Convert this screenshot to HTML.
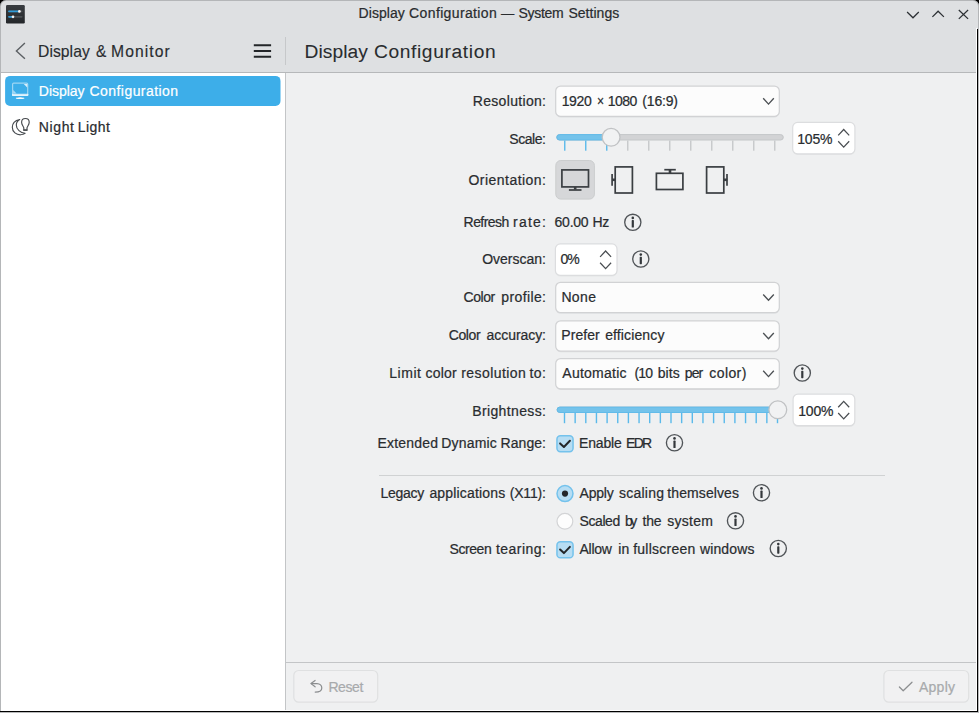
<!DOCTYPE html>
<html><head><meta charset="utf-8"><title>Display Configuration — System Settings</title>
<style>
html,body{margin:0;padding:0;}
body{width:979px;height:713px;overflow:hidden;background:#000;position:relative;font-family:"Liberation Sans",sans-serif;}
.a{position:absolute;}
.t{position:absolute;-webkit-text-stroke:0.22px currentColor;white-space:pre;line-height:24px;height:24px;font-family:"Liberation Sans",sans-serif;}
svg{position:absolute;overflow:visible;}
</style></head><body>
<!-- outer frame -->
<div class="a" style="left:0;top:0;width:979px;height:713px;background:#b9babb;border-radius:6px 6px 0 0;"></div>
<div class="a" style="left:0;top:0;width:978px;height:712px;background:#000;border-radius:6px 6px 0 0;"></div>
<!-- titlebar + header -->
<div class="a" style="left:0;top:0;width:979px;height:29px;background:#b4b6b8;border-radius:6px 6px 0 0;"></div>
<div class="a" style="left:1px;top:1px;width:977px;height:28px;background:#dee0e2;border-radius:5px 5px 0 0;"></div>
<div class="a" style="left:0;top:29px;width:1px;height:682px;background:#b4b6b8;"></div>
<div class="a" style="left:1px;top:28px;width:976px;height:683px;background:#ffffff;"></div>
<div class="a" style="left:1px;top:28px;width:975px;height:44px;background:#dee0e2;"></div>
<div class="a" style="left:1px;top:72px;width:975px;height:1px;background:#b6b8ba;"></div>
<!-- sidebar -->
<div class="a" style="left:1px;top:73px;width:284px;height:637px;background:#ffffff;"></div>
<div class="a" style="left:285px;top:73px;width:1px;height:637px;background:#c3c5c7;"></div>
<div class="a" style="left:285px;top:37px;width:1px;height:28px;background:#c6c8ca;"></div>
<!-- content -->
<div class="a" style="left:286px;top:73px;width:690px;height:589px;background:#eff0f1;"></div>
<div class="a" style="left:286px;top:662px;width:690px;height:1px;background:#c3c5c7;"></div>
<div class="a" style="left:286px;top:663px;width:690px;height:47px;background:#eff0f1;"></div>
<!-- selected item -->
<svg style="left:0;top:70px" width="290" height="40" viewBox="0 70 290 40"><rect x="5.1" y="75.9" width="275.4" height="30" rx="5" fill="#3daee9"/></svg>
<svg style="left:6.1px;top:5.25px" width="18.8" height="18.4" viewBox="0 0 18.8 18.4">
<defs><linearGradient id="g1" x1="0" y1="0" x2="0" y2="1"><stop offset="0" stop-color="#383c40"/><stop offset="1" stop-color="#24272a"/></linearGradient></defs>
<rect width="18.8" height="18.4" rx="1.2" fill="url(#g1)"/>
<rect x="2.1" y="5.6" width="14.5" height="1.7" rx="0.8" fill="#4a4e52"/>
<rect x="2.1" y="5.6" width="11.2" height="1.7" rx="0.8" fill="#2f9bd8"/>
<circle cx="13.4" cy="6.45" r="1.35" fill="#f4f4f4"/>
<rect x="2.1" y="10.95" width="14.5" height="1.7" rx="0.8" fill="#4a4e52"/>
<rect x="2.1" y="10.95" width="4.6" height="1.7" rx="0.8" fill="#2f9bd8"/>
<circle cx="7" cy="11.8" r="1.35" fill="#f4f4f4"/>
</svg>
<svg style="left:0;top:0" width="979" height="30" viewBox="0 0 979 30" fill="none" stroke="#2c3034" stroke-width="1.25">
<path d="M907.1 12 L913 17.8 L918.8 12"/>
<path d="M932.4 16.9 L938.1 11.2 L943.9 16.9"/>
<path d="M958.8 10 L968.1 18.9 M968.1 10 L958.8 18.9"/>
</svg>
<svg style="left:0;top:30px" width="290" height="42" viewBox="0 30 290 42" fill="none">
<path d="M24.9 42.9 L16.4 50.9 L24.9 58.8" stroke="#5c6064" stroke-width="1.4"/>
<g stroke="#232629" stroke-width="2"><path d="M253.8 45.2H271.1M253.8 50.9H271.1M253.8 56.7H271.1"/></g>
</svg>
<svg style="left:0;top:76px" width="40" height="30" viewBox="0 76 40 30">
<rect x="12.6" y="83.2" width="15.1" height="12.2" rx="1" fill="none" stroke="#ffffff" stroke-opacity="0.5" stroke-width="1.2"/>
<rect x="12" y="93.7" width="16.3" height="2.3" rx="0.6" fill="#ffffff" fill-opacity="0.72"/>
<path d="M23.8 84 L27.2 84 L27.2 87.4 Z" fill="#ffffff" fill-opacity="0.8"/>
<path d="M13.2 90 L16.6 93.6 L13.2 93.6 Z" fill="#ffffff" fill-opacity="0.55"/>
<path d="M15.9 98.9 Q20.1 95.6 24.3 98.9 Z" fill="#ffffff" fill-opacity="0.85"/>
<rect x="15.9" y="97.6" width="8.4" height="1.4" rx="0.5" fill="#ffffff" fill-opacity="0.6"/>
</svg>
<svg style="left:0;top:110px" width="40" height="30" viewBox="0 110 40 30" fill="none" stroke="#474b4f" stroke-width="1.15" stroke-linejoin="round" stroke-linecap="round">
<path d="M19.7 119.5 C14.5 120.2 12.3 124 12.3 127.2 C12.3 132 16.5 134.9 20.5 134.8 C22.5 134.7 24 134.2 25.1 133.4 C20.5 132.8 16.3 129.5 16.3 125 C16.3 122.5 17.8 120.6 19.7 119.5 Z"/>
<path d="M23.8 130.2 L23.8 127.9 C23.5 126.2 21.6 124.9 21.6 122.2 C21.6 120.1 23.3 118.5 25.4 118.5 C27.5 118.5 29.2 120.1 29.2 122.2 C29.2 124.9 27.3 126.2 27 127.9 L27 130.2 Z"/>
<path d="M24 130 H26.8" stroke-width="1.6"/>
</svg>
<svg style="left:0;top:0" width="979" height="713" viewBox="0 0 979 713" ><rect x="555.50" y="86.80" width="224.00" height="30.80" rx="5.5" fill="#dcdddf"/><rect x="555.70" y="86.10" width="223.60" height="30.20" rx="4.90" fill="#fcfcfc" stroke="#d1d2d4" stroke-width="1.2"/><path d="M763.2 98.30 L768.5 104.10 L773.8 98.30" fill="none" stroke="#4c5054" stroke-width="1.35"/></svg>
<svg style="left:0;top:0" width="979" height="713" viewBox="0 0 979 713" ><rect x="555.50" y="283.00" width="224.00" height="30.80" rx="5.5" fill="#dcdddf"/><rect x="555.70" y="282.30" width="223.60" height="30.20" rx="4.90" fill="#fcfcfc" stroke="#d1d2d4" stroke-width="1.2"/><path d="M763.2 294.50 L768.5 300.30 L773.8 294.50" fill="none" stroke="#4c5054" stroke-width="1.35"/></svg>
<svg style="left:0;top:0" width="979" height="713" viewBox="0 0 979 713" ><rect x="555.50" y="321.50" width="224.00" height="30.80" rx="5.5" fill="#dcdddf"/><rect x="555.70" y="320.80" width="223.60" height="30.20" rx="4.90" fill="#fcfcfc" stroke="#d1d2d4" stroke-width="1.2"/><path d="M763.2 333.00 L768.5 338.80 L773.8 333.00" fill="none" stroke="#4c5054" stroke-width="1.35"/></svg>
<svg style="left:0;top:0" width="979" height="713" viewBox="0 0 979 713" ><rect x="555.50" y="359.30" width="224.00" height="30.80" rx="5.5" fill="#dcdddf"/><rect x="555.70" y="358.60" width="223.60" height="30.20" rx="4.90" fill="#fcfcfc" stroke="#d1d2d4" stroke-width="1.2"/><path d="M763.2 370.80 L768.5 376.60 L773.8 370.80" fill="none" stroke="#4c5054" stroke-width="1.35"/></svg>
<svg style="left:0;top:0" width="979" height="713" viewBox="0 0 979 713" ><rect x="792.50" y="123.10" width="62.60" height="32.00" rx="5.5" fill="#e4e5e6"/><rect x="792.70" y="122.40" width="62.20" height="31.40" rx="4.90" fill="#ffffff" stroke="#dcdddf" stroke-width="1.2"/><path d="M838.2 135.40 L843.7 129.50 L849.2 135.40 M838.2 141.20 L843.7 147.10 L849.2 141.20" fill="none" stroke="#4a4e52" stroke-width="1.25"/></svg>
<svg style="left:0;top:0" width="979" height="713" viewBox="0 0 979 713" ><rect x="555.20" y="244.60" width="62.00" height="32.00" rx="5.5" fill="#e4e5e6"/><rect x="555.40" y="243.90" width="61.60" height="31.40" rx="4.90" fill="#ffffff" stroke="#dcdddf" stroke-width="1.2"/><path d="M600.1 256.90 L605.6 251.00 L611.1 256.90 M600.1 262.70 L605.6 268.60 L611.1 262.70" fill="none" stroke="#4a4e52" stroke-width="1.25"/></svg>
<svg style="left:0;top:0" width="979" height="713" viewBox="0 0 979 713" ><rect x="792.90" y="394.80" width="62.10" height="32.20" rx="5.5" fill="#e4e5e6"/><rect x="793.10" y="394.10" width="61.70" height="31.60" rx="4.90" fill="#ffffff" stroke="#dcdddf" stroke-width="1.2"/><path d="M838.2 407.20 L843.7 401.30 L849.2 407.20 M838.2 413.00 L843.7 418.90 L849.2 413.00" fill="none" stroke="#4a4e52" stroke-width="1.25"/></svg>
<svg style="left:0;top:0" width="979" height="713" viewBox="0 0 979 713" ><rect x="556.80" y="134.60" width="226.50" height="5.40" rx="2.70" fill="#d2d3d5" stroke="#c4c6c8" stroke-width="1.0"/><rect x="556.80" y="134.60" width="56.80" height="5.40" rx="2.70" fill="#74c3eb" stroke="#62bbe9" stroke-width="1.0"/><rect x="564.05" y="140.50" width="1.4" height="10.2" fill="#5ab9ea"/><rect x="585.05" y="140.50" width="1.4" height="10.2" fill="#5ab9ea"/><rect x="606.05" y="140.50" width="1.4" height="10.2" fill="#5ab9ea"/><rect x="627.05" y="140.50" width="1.4" height="10.2" fill="#c6c8ca"/><rect x="648.05" y="140.50" width="1.4" height="10.2" fill="#c6c8ca"/><rect x="669.05" y="140.50" width="1.4" height="10.2" fill="#c6c8ca"/><rect x="690.05" y="140.50" width="1.4" height="10.2" fill="#c6c8ca"/><rect x="711.05" y="140.50" width="1.4" height="10.2" fill="#c6c8ca"/><rect x="732.05" y="140.50" width="1.4" height="10.2" fill="#c6c8ca"/><rect x="753.05" y="140.50" width="1.4" height="10.2" fill="#c6c8ca"/><rect x="774.05" y="140.50" width="1.4" height="10.2" fill="#c6c8ca"/><circle cx="611.1" cy="137.3" r="8.9" fill="#f1f2f3" stroke="#c0c2c4" stroke-width="1.3"/></svg>
<svg style="left:0;top:0" width="979" height="713" viewBox="0 0 979 713" ><rect x="557.10" y="407.10" width="226.20" height="5.40" rx="2.70" fill="#d2d3d5" stroke="#c4c6c8" stroke-width="1.0"/><rect x="557.10" y="407.10" width="223.20" height="5.40" rx="2.70" fill="#74c3eb" stroke="#62bbe9" stroke-width="1.0"/><rect x="563.80" y="413.00" width="1.4" height="10.2" fill="#5ab9ea"/><rect x="574.45" y="413.00" width="1.4" height="10.2" fill="#5ab9ea"/><rect x="585.10" y="413.00" width="1.4" height="10.2" fill="#5ab9ea"/><rect x="595.75" y="413.00" width="1.4" height="10.2" fill="#5ab9ea"/><rect x="606.40" y="413.00" width="1.4" height="10.2" fill="#5ab9ea"/><rect x="617.05" y="413.00" width="1.4" height="10.2" fill="#5ab9ea"/><rect x="627.70" y="413.00" width="1.4" height="10.2" fill="#5ab9ea"/><rect x="638.35" y="413.00" width="1.4" height="10.2" fill="#5ab9ea"/><rect x="649.00" y="413.00" width="1.4" height="10.2" fill="#5ab9ea"/><rect x="659.65" y="413.00" width="1.4" height="10.2" fill="#5ab9ea"/><rect x="670.30" y="413.00" width="1.4" height="10.2" fill="#5ab9ea"/><rect x="680.95" y="413.00" width="1.4" height="10.2" fill="#5ab9ea"/><rect x="691.60" y="413.00" width="1.4" height="10.2" fill="#5ab9ea"/><rect x="702.25" y="413.00" width="1.4" height="10.2" fill="#5ab9ea"/><rect x="712.90" y="413.00" width="1.4" height="10.2" fill="#5ab9ea"/><rect x="723.55" y="413.00" width="1.4" height="10.2" fill="#5ab9ea"/><rect x="734.20" y="413.00" width="1.4" height="10.2" fill="#5ab9ea"/><rect x="744.85" y="413.00" width="1.4" height="10.2" fill="#5ab9ea"/><rect x="755.50" y="413.00" width="1.4" height="10.2" fill="#5ab9ea"/><rect x="766.15" y="413.00" width="1.4" height="10.2" fill="#5ab9ea"/><rect x="776.80" y="413.00" width="1.4" height="10.2" fill="#5ab9ea"/><circle cx="777.8" cy="409.8" r="8.9" fill="#f1f2f3" stroke="#c0c2c4" stroke-width="1.3"/></svg>
<svg style="left:0;top:0" width="979" height="713" viewBox="0 0 979 713" ><rect x="555.80" y="160.50" width="38.60" height="38.60" rx="5.00" fill="#d6d7d9" stroke="#cbcdce" stroke-width="1.0"/></svg>
<svg style="left:0;top:0" width="979" height="713" viewBox="0 0 979 713" fill="none" stroke="#3a3e42" stroke-width="1.7">
<rect x="561.9" y="169.9" width="26.6" height="17"/>
<path d="M575.2 187 V189.6" stroke-width="2.6"/><path d="M568.9 190 H581.5"/>
<rect x="615.2" y="166.9" width="17.2" height="26.1"/>
<path d="M612.1 174 V185.7"/><path d="M612 179.8 H615" stroke-width="2.6"/>
<rect x="656.4" y="173.3" width="26.5" height="16.2"/>
<path d="M664.3 169.7 H675.8"/><path d="M670 169.7 V173" stroke-width="2.6"/>
<rect x="706.6" y="166.9" width="17.2" height="26.1"/>
<path d="M727 174 V185.7"/><path d="M724 179.8 H727.2" stroke-width="2.6"/>
</svg>
<svg style="left:0;top:0" width="979" height="713" viewBox="0 0 979 713"><circle cx="632.8" cy="222.3" r="8.1" fill="none" stroke="#505458" stroke-width="1.35"/><circle cx="632.8" cy="217.9" r="1.3" fill="#34383c"/><rect x="631.6999999999999" y="220.10000000000002" width="2.2" height="7.4" rx="0.6" fill="#34383c"/></svg>
<svg style="left:0;top:0" width="979" height="713" viewBox="0 0 979 713"><circle cx="640.8" cy="259" r="8.1" fill="none" stroke="#505458" stroke-width="1.35"/><circle cx="640.8" cy="254.6" r="1.3" fill="#34383c"/><rect x="639.6999999999999" y="256.8" width="2.2" height="7.4" rx="0.6" fill="#34383c"/></svg>
<svg style="left:0;top:0" width="979" height="713" viewBox="0 0 979 713"><circle cx="802.3" cy="373" r="8.1" fill="none" stroke="#505458" stroke-width="1.35"/><circle cx="802.3" cy="368.6" r="1.3" fill="#34383c"/><rect x="801.1999999999999" y="370.8" width="2.2" height="7.4" rx="0.6" fill="#34383c"/></svg>
<svg style="left:0;top:0" width="979" height="713" viewBox="0 0 979 713"><circle cx="674.5" cy="442.8" r="8.1" fill="none" stroke="#505458" stroke-width="1.35"/><circle cx="674.5" cy="438.40000000000003" r="1.3" fill="#34383c"/><rect x="673.4" y="440.6" width="2.2" height="7.4" rx="0.6" fill="#34383c"/></svg>
<svg style="left:0;top:0" width="979" height="713" viewBox="0 0 979 713"><circle cx="761.5" cy="492.8" r="8.1" fill="none" stroke="#505458" stroke-width="1.35"/><circle cx="761.5" cy="488.40000000000003" r="1.3" fill="#34383c"/><rect x="760.4" y="490.6" width="2.2" height="7.4" rx="0.6" fill="#34383c"/></svg>
<svg style="left:0;top:0" width="979" height="713" viewBox="0 0 979 713"><circle cx="735.5" cy="520.8" r="8.1" fill="none" stroke="#505458" stroke-width="1.35"/><circle cx="735.5" cy="516.4" r="1.3" fill="#34383c"/><rect x="734.4" y="518.5999999999999" width="2.2" height="7.4" rx="0.6" fill="#34383c"/></svg>
<svg style="left:0;top:0" width="979" height="713" viewBox="0 0 979 713"><circle cx="778.3" cy="548.5" r="8.1" fill="none" stroke="#505458" stroke-width="1.35"/><circle cx="778.3" cy="544.1" r="1.3" fill="#34383c"/><rect x="777.1999999999999" y="546.3" width="2.2" height="7.4" rx="0.6" fill="#34383c"/></svg>
<svg style="left:0;top:0" width="979" height="713" viewBox="0 0 979 713" ><rect x="556.95" y="435.65" width="16.10" height="16.10" rx="3.45" fill="#b7ddf3" stroke="#74c2ec" stroke-width="1.5"/><path d="M560.10 443.40 L563.90 447.00 L569.90 440.80" fill="none" stroke="#232629" stroke-width="2" stroke-linecap="round" stroke-linejoin="round"/></svg>
<svg style="left:0;top:0" width="979" height="713" viewBox="0 0 979 713" ><rect x="556.95" y="541.75" width="16.10" height="16.10" rx="3.45" fill="#b7ddf3" stroke="#74c2ec" stroke-width="1.5"/><path d="M560.10 549.50 L563.90 553.10 L569.90 546.90" fill="none" stroke="#232629" stroke-width="2" stroke-linecap="round" stroke-linejoin="round"/></svg>
<svg style="left:0;top:0" width="979" height="713" viewBox="0 0 979 713" ><circle cx="565" cy="493.6" r="8" fill="#b7ddf3" stroke="#74c2ec" stroke-width="1.5"/><circle cx="565" cy="493.6" r="3.1" fill="#232629"/><circle cx="564.9" cy="521.3" r="7.9" fill="#fdfdfd" stroke="#d3d4d6" stroke-width="1.2"/></svg>
<div class="a" style="left:378.5px;top:475px;width:506.5px;height:1px;background:#d0d2d3"></div>
<svg style="left:0;top:0" width="979" height="713" viewBox="0 0 979 713" ><rect x="293.80" y="670.50" width="83.90" height="31.70" rx="4.90" fill="#f1f1f2" stroke="#dfe0e1" stroke-width="1.2"/><rect x="883.90" y="670.50" width="84.80" height="31.70" rx="4.90" fill="#f1f1f2" stroke="#dfe0e1" stroke-width="1.2"/></svg>
<svg style="left:0;top:0" width="979" height="713" viewBox="0 0 979 713" fill="none" stroke="#8b8d8f" stroke-width="1.2" stroke-linecap="round" stroke-linejoin="round">
<path d="M315.1 680.5 L311 683.6 L315.1 686.8"/>
<path d="M311.3 683.6 H317 C320 683.6 321.8 685.7 321.8 688 C321.8 690.4 319.6 692.1 315.2 692.1"/>
<path d="M899.4 687 L903.2 690.8 L912 682.2" stroke="#8c8e90" stroke-width="1.25"/>
</svg>
<span class="t" style="left:358.60px;top:1.20px;font-size:14.0px;letter-spacing:0.049px;color:#292c2f">Display</span>
<span class="t" style="left:409.10px;top:1.20px;font-size:14.0px;letter-spacing:0.368px;color:#292c2f">Configuration</span>
<span class="t" style="transform:scaleX(0.950);transform-origin:0 0;left:501.00px;top:1.20px;font-size:14.0px;letter-spacing:0.000px;color:#292c2f">—</span>
<span class="t" style="left:518.60px;top:1.20px;font-size:14.0px;letter-spacing:-0.323px;color:#292c2f">System</span>
<span class="t" style="left:568.40px;top:1.20px;font-size:14.0px;letter-spacing:0.031px;color:#292c2f">Settings</span>
<span class="t" style="-webkit-text-stroke-width:0.15px;left:38.05px;top:39.56px;font-size:15.7px;letter-spacing:0.043px;color:#292c2f">Display</span>
<span class="t" style="-webkit-text-stroke-width:0.15px;transform:scaleX(0.982);transform-origin:0 0;left:96.00px;top:39.56px;font-size:15.7px;letter-spacing:0.000px;color:#292c2f">&amp;</span>
<span class="t" style="-webkit-text-stroke-width:0.15px;left:111.10px;top:39.56px;font-size:15.7px;letter-spacing:1.069px;color:#292c2f">Monitor</span>
<span class="t" style="-webkit-text-stroke-width:0.08px;left:304.60px;top:39.65px;font-size:19.2px;letter-spacing:0.047px;color:#292c2f">Display</span>
<span class="t" style="-webkit-text-stroke-width:0.08px;left:373.90px;top:39.65px;font-size:19.2px;letter-spacing:0.637px;color:#292c2f">Configuration</span>
<span class="t" style="left:38.80px;top:78.95px;font-size:14.0px;letter-spacing:-0.017px;color:#ffffff">Display</span>
<span class="t" style="left:89.50px;top:78.95px;font-size:14.0px;letter-spacing:0.443px;color:#ffffff">Configuration</span>
<span class="t" style="left:38.80px;top:114.65px;font-size:14.0px;letter-spacing:0.627px;color:#292c2f">Night</span>
<span class="t" style="left:77.70px;top:114.65px;font-size:14.0px;letter-spacing:0.483px;color:#292c2f">Light</span>
<span class="t" style="left:472.75px;top:88.95px;font-size:14.0px;letter-spacing:0.320px;color:#292c2f">Resolution:</span>
<span class="t" style="left:509.25px;top:126.70px;font-size:14.0px;letter-spacing:-0.434px;color:#292c2f">Scale:</span>
<span class="t" style="left:468.50px;top:168.45px;font-size:14.0px;letter-spacing:0.465px;color:#292c2f">Orientation:</span>
<span class="t" style="left:463.60px;top:209.75px;font-size:14.0px;letter-spacing:-0.572px;color:#292c2f">Refresh</span>
<span class="t" style="left:513.10px;top:209.75px;font-size:14.0px;letter-spacing:1.219px;color:#292c2f">rate:</span>
<span class="t" style="left:482.20px;top:247.25px;font-size:14.0px;letter-spacing:-0.001px;color:#292c2f">Overscan:</span>
<span class="t" style="left:463.60px;top:285.25px;font-size:14.0px;letter-spacing:-0.448px;color:#292c2f">Color</span>
<span class="t" style="left:501.30px;top:285.25px;font-size:14.0px;letter-spacing:0.381px;color:#292c2f">profile:</span>
<span class="t" style="left:448.80px;top:323.15px;font-size:14.0px;letter-spacing:-0.423px;color:#292c2f">Color</span>
<span class="t" style="left:486.60px;top:323.15px;font-size:14.0px;letter-spacing:-0.065px;color:#292c2f">accuracy:</span>
<span class="t" style="left:389.20px;top:360.95px;font-size:14.0px;letter-spacing:0.558px;color:#292c2f">Limit</span>
<span class="t" style="left:425.60px;top:360.95px;font-size:14.0px;letter-spacing:0.204px;color:#292c2f">color</span>
<span class="t" style="left:461.20px;top:360.95px;font-size:14.0px;letter-spacing:0.431px;color:#292c2f">resolution</span>
<span class="t" style="left:529.50px;top:360.95px;font-size:14.0px;letter-spacing:0.462px;color:#292c2f">to:</span>
<span class="t" style="left:472.20px;top:398.95px;font-size:14.0px;letter-spacing:0.376px;color:#292c2f">Brightness:</span>
<span class="t" style="left:377.50px;top:431.25px;font-size:14.0px;letter-spacing:0.204px;color:#292c2f">Extended</span>
<span class="t" style="left:441.30px;top:431.25px;font-size:14.0px;letter-spacing:0.174px;color:#292c2f">Dynamic</span>
<span class="t" style="left:500.60px;top:431.25px;font-size:14.0px;letter-spacing:0.049px;color:#292c2f">Range:</span>
<span class="t" style="left:380.60px;top:481.05px;font-size:14.0px;letter-spacing:-0.289px;color:#292c2f">Legacy</span>
<span class="t" style="left:429.40px;top:481.05px;font-size:14.0px;letter-spacing:0.169px;color:#292c2f">applications</span>
<span class="t" style="left:509.70px;top:481.05px;font-size:14.0px;letter-spacing:-0.159px;color:#292c2f">(X11):</span>
<span class="t" style="left:449.50px;top:537.25px;font-size:14.0px;letter-spacing:-0.434px;color:#292c2f">Screen</span>
<span class="t" style="left:495.90px;top:537.25px;font-size:14.0px;letter-spacing:0.485px;color:#292c2f">tearing:</span>
<span class="t" style="left:561.70px;top:88.75px;font-size:14.0px;letter-spacing:-0.386px;color:#292c2f">1920</span>
<span class="t" style="transform:scaleX(0.862);transform-origin:0 0;left:596.60px;top:88.75px;font-size:14.0px;letter-spacing:0.000px;color:#292c2f">×</span>
<span class="t" style="left:607.80px;top:88.75px;font-size:14.0px;letter-spacing:-0.586px;color:#292c2f">1080</span>
<span class="t" style="left:642.30px;top:88.75px;font-size:14.0px;letter-spacing:-0.182px;color:#292c2f">(16:9)</span>
<span class="t" style="left:797.25px;top:126.70px;font-size:14.0px;letter-spacing:-0.203px;color:#292c2f">105%</span>
<span class="t" style="left:554.60px;top:209.75px;font-size:14.0px;letter-spacing:-0.262px;color:#292c2f">60.00</span>
<span class="t" style="left:592.40px;top:209.75px;font-size:14.0px;letter-spacing:-0.310px;color:#292c2f">Hz</span>
<span class="t" style="left:560.50px;top:247.25px;font-size:14.0px;letter-spacing:-1.036px;color:#292c2f">0%</span>
<span class="t" style="left:561.40px;top:285.35px;font-size:14.0px;letter-spacing:0.372px;color:#292c2f">None</span>
<span class="t" style="left:561.30px;top:323.15px;font-size:14.0px;letter-spacing:0.068px;color:#292c2f">Prefer</span>
<span class="t" style="left:605.20px;top:323.15px;font-size:14.0px;letter-spacing:0.122px;color:#292c2f">efficiency</span>
<span class="t" style="left:562.30px;top:361.05px;font-size:14.0px;letter-spacing:0.256px;color:#292c2f">Automatic</span>
<span class="t" style="left:634.40px;top:361.05px;font-size:14.0px;letter-spacing:-0.824px;color:#292c2f">(10</span>
<span class="t" style="left:657.70px;top:361.05px;font-size:14.0px;letter-spacing:0.071px;color:#292c2f">bits</span>
<span class="t" style="left:684.80px;top:361.05px;font-size:14.0px;letter-spacing:-0.886px;color:#292c2f">per</span>
<span class="t" style="left:709.30px;top:361.05px;font-size:14.0px;letter-spacing:0.411px;color:#292c2f">color)</span>
<span class="t" style="left:798.20px;top:398.95px;font-size:14.0px;letter-spacing:-0.186px;color:#292c2f">100%</span>
<span class="t" style="left:579.10px;top:431.35px;font-size:14.0px;letter-spacing:-0.181px;color:#292c2f">Enable</span>
<span class="t" style="left:626.10px;top:431.35px;font-size:14.0px;letter-spacing:-1.774px;color:#292c2f">EDR</span>
<span class="t" style="left:579.50px;top:481.05px;font-size:14.0px;letter-spacing:-0.180px;color:#292c2f">Apply</span>
<span class="t" style="left:618.90px;top:481.05px;font-size:14.0px;letter-spacing:0.268px;color:#292c2f">scaling</span>
<span class="t" style="left:667.30px;top:481.05px;font-size:14.0px;letter-spacing:0.099px;color:#292c2f">themselves</span>
<span class="t" style="left:579.50px;top:508.95px;font-size:14.0px;letter-spacing:-0.404px;color:#292c2f">Scaled</span>
<span class="t" style="left:625.00px;top:508.95px;font-size:14.0px;letter-spacing:-2.486px;color:#292c2f">by</span>
<span class="t" style="left:642.40px;top:508.95px;font-size:14.0px;letter-spacing:-0.138px;color:#292c2f">the</span>
<span class="t" style="left:667.30px;top:508.95px;font-size:14.0px;letter-spacing:0.265px;color:#292c2f">system</span>
<span class="t" style="left:579.50px;top:537.25px;font-size:14.0px;letter-spacing:-0.261px;color:#292c2f">Allow</span>
<span class="t" style="left:618.30px;top:537.25px;font-size:14.0px;letter-spacing:0.090px;color:#292c2f">in</span>
<span class="t" style="left:633.20px;top:537.25px;font-size:14.0px;letter-spacing:0.241px;color:#292c2f">fullscreen</span>
<span class="t" style="left:700.00px;top:537.25px;font-size:14.0px;letter-spacing:0.118px;color:#292c2f">windows</span>
<span class="t" style="left:328.40px;top:674.95px;font-size:14.0px;letter-spacing:-0.421px;color:#a8aaac">Reset</span>
<span class="t" style="left:919.00px;top:675.35px;font-size:14.0px;letter-spacing:0.245px;color:#a8aaac">Apply</span>
</body></html>
